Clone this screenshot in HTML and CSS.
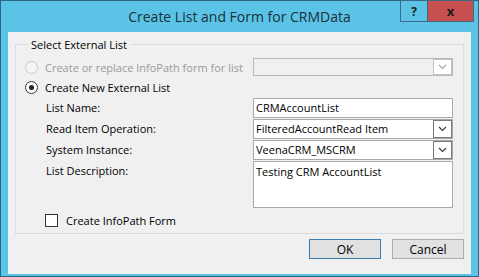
FILE: index.html
```html
<!DOCTYPE html>
<html lang="en">
<head>
  <meta charset="UTF-8" />
  <title>Create List and Form for CRMData</title>
  <link rel="stylesheet" href="styles.css">
</head>
<body>
  <div class="window">
    <!-- Title bar -->
    <div class="titlebar">
      <span class="title">Create List and Form for CRMData</span>
      <div class="caption-buttons">
        <span class="cap-btn help">?</span>
        <span class="cap-btn close">x</span>
      </div>
    </div>

    <div class="client">
      <fieldset class="group">
        <legend>Select External List</legend>

        <div class="form-grid">
          <label class="option disabled">
            <span class="radio"></span>
            Create or replace InfoPath form for list
          </label>
          <div class="combo disabled">
            <span class="combo-text"></span>
            <span class="combo-arrow">
              <svg width="9" height="6" viewBox="0 0 9 6"><path d="M1 1 L4.5 4.5 L8 1" fill="none" stroke="currentColor" stroke-width="1.2"/></svg>
            </span>
          </div>

          <label class="option full">
            <span class="radio checked"></span>
            Create New External List
          </label>

          <span class="field-label">List Name:</span>
          <div class="textbox">CRMAccountList</div>

          <span class="field-label">Read Item Operation:</span>
          <div class="combo">
            <span class="combo-text">FilteredAccountRead Item</span>
            <span class="combo-arrow">
              <svg width="9" height="6" viewBox="0 0 9 6"><path d="M1 1 L4.5 4.5 L8 1" fill="none" stroke="currentColor" stroke-width="1.2"/></svg>
            </span>
          </div>

          <span class="field-label">System Instance:</span>
          <div class="combo">
            <span class="combo-text">VeenaCRM_MSCRM</span>
            <span class="combo-arrow">
              <svg width="9" height="6" viewBox="0 0 9 6"><path d="M1 1 L4.5 4.5 L8 1" fill="none" stroke="currentColor" stroke-width="1.2"/></svg>
            </span>
          </div>

          <span class="field-label">List Description:</span>
          <div class="textbox multiline">Testing CRM AccountList</div>

          <label class="check-row full">
            <span class="checkbox"></span>
            Create InfoPath Form
          </label>
        </div>
      </fieldset>

      <div class="button-row">
        <button class="btn default">OK</button>
        <button class="btn">Cancel</button>
      </div>
    </div>
  </div>
</body>
</html>
```

FILE: styles.css
```css
body {
  margin: 0;
  font-family: "Open Sans", "Noto Sans", sans-serif;
  font-size: 11px;
  color: #000;
  background: #fff;
}

.window {
  width: 477px;
  height: 275px;
  border: 1px solid #2a6784;
  background-color: #5bc3e6;
  display: flex;
  flex-direction: column;
}

/* Title bar */
.titlebar {
  position: relative;
  height: 31px;
  display: flex;
  align-items: center;
  justify-content: center;
}

.title {
  font-size: 14px;
  color: #1b2f3a;
  margin-top: -1px;
}

.caption-buttons {
  position: absolute;
  top: -1px;
  right: 4px;
  display: flex;
}

.cap-btn {
  height: 20px;
  border: 1px solid #3b6b84;
  display: flex;
  align-items: center;
  justify-content: center;
  font-weight: bold;
  color: #1a1a1a;
}

.help {
  width: 26px;
  font-size: 12px;
  background-color: #5bc3e6;
}

.close {
  width: 45px;
  margin-left: -1px;
  font-size: 13px;
  background-color: #c75050;
}

/* Client area */
.client {
  margin: 0 7px 0 7px;
  height: 237px;
  background-color: #f0f0f0;
  padding: 5px 7px 0 7px;
}

.group {
  margin: 0;
  border: 1px solid #dcdcdc;
  padding: 6px 9px 0 9px;
  height: 189px;
}

.group legend {
  padding: 0 3px;
  margin-left: 3px;
  color: #000;
}

.form-grid {
  display: grid;
  grid-template-columns: 228px 200px;
  row-gap: 1px;
  align-items: start;
}

.full {
  grid-column: 1 / 3;
}

.option {
  display: flex;
  align-items: center;
  gap: 7px;
  height: 18px;
  white-space: nowrap;
}

.option.full {
  height: 20px;
}

.option.disabled {
  color: #9b9b9b;
}

.radio {
  width: 11px;
  height: 11px;
  border: 1px solid #333;
  border-radius: 50%;
  background: #fff;
  display: flex;
  align-items: center;
  justify-content: center;
  flex-shrink: 0;
}

.disabled .radio {
  border-color: #c8c8c8;
  background: #f4f4f4;
}

.radio.checked::after {
  content: "";
  width: 5px;
  height: 5px;
  border-radius: 50%;
  background: #222;
}

.field-label {
  padding-left: 21px;
  padding-top: 2px;
  height: 18px;
  white-space: nowrap;
}

.textbox,
.combo {
  height: 18px;
  border: 1px solid #a9a9a9;
  background: #fff;
  line-height: 18px;
  padding-left: 2px;
  white-space: nowrap;
}

.textbox.multiline {
  height: 44px;
  line-height: 17px;
  padding-top: 1px;
}

.combo {
  display: flex;
  justify-content: space-between;
  padding: 0;
}

.combo-text {
  padding-left: 2px;
}

.combo-arrow {
  width: 17px;
  height: 16px;
  border: 1px solid #7a7a7a;
  display: flex;
  align-items: center;
  justify-content: center;
  color: #3c3c3c;
}

.combo.disabled {
  height: 16px;
  background: #f0f0f0;
  border-color: #b9b9b9;
}

.combo.disabled .combo-arrow {
  height: 14px;
  border-color: #c3c3c3;
  background: #fff;
  color: #a8a8a8;
}

.check-row {
  display: flex;
  align-items: center;
  gap: 8px;
  height: 13px;
  margin-top: 5px;
  padding-left: 20px;
}

.checkbox {
  width: 11px;
  height: 11px;
  border: 1px solid #333;
  background: #fff;
}

/* Dialog buttons */
.button-row {
  display: flex;
  justify-content: flex-end;
  gap: 11px;
  margin-top: 5px;
}

.btn {
  width: 72px;
  height: 20px;
  font-family: inherit;
  font-size: 12px;
  color: #000;
  background-color: #e1e1e1;
  border: 1px solid #adadad;
  padding: 0;
}

.btn.default {
  border-color: #3c7fb1;
}
```
